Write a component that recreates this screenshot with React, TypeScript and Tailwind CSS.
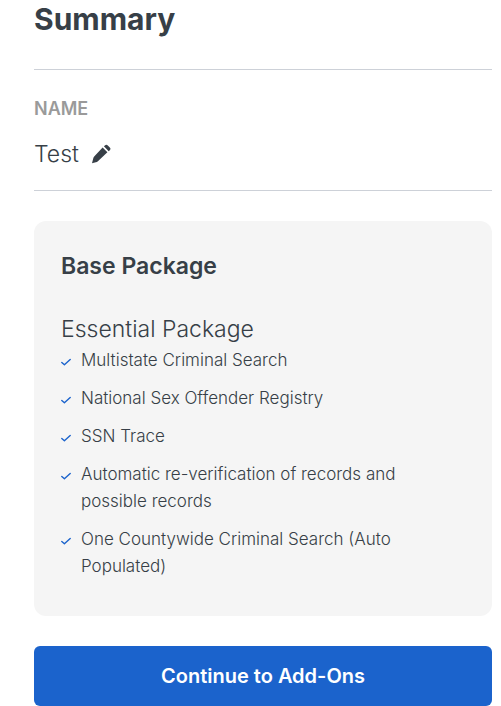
const packageItems = [
  "Multistate Criminal Search",
  "National Sex Offender Registry",
  "SSN Trace",
  "Automatic re-verification of records and possible records",
  "One Countywide Criminal Search (Auto Populated)",
];

const PencilIcon = () => (
  <svg viewBox="0 0 20 20" className="size-5" fill="currentColor" aria-hidden="true">
    <path d="M11.6 3.4 16.4 8.2 6.9 17.2Q6 18 4.8 18.3L1 19.2 2.1 15Q2.4 13.6 3.2 12.6z" />
    <path d="m12.9 2.3 1-.9a2.1 2.1 0 0 1 2.9 0l2 2a2.1 2.1 0 0 1 0 2.9l-1.1 1z" />
  </svg>
);

const CheckIcon = () => (
  <svg
    viewBox="0 0 10 8"
    className="mt-[11px] h-2 w-2.5 shrink-0"
    fill="none"
    stroke="#1b63cc"
    strokeWidth="1.4"
    strokeLinecap="round"
    strokeLinejoin="round"
    aria-hidden="true"
  >
    <path d="M.8 4.4 3.4 6.7 9.2 1.5" />
  </svg>
);

const App = () => {
  return (
    <main className="min-h-screen bg-white pl-[34px] pr-[9px] font-['Inter',sans-serif] text-[#373f47]">
      <h1 className="border-b border-[#cdd1d8] pb-8 pt-px text-[30px] font-bold leading-9">
        Summary
      </h1>

      <section className="border-b border-[#cdd1d8] pb-5 pt-[25px]">
        <h2 className="text-lg font-semibold leading-7 text-[#9a9a9a]">NAME</h2>
        <div className="mt-[15px] flex items-center gap-3">
          <span className="text-[23px] font-light leading-8">Test</span>
          <button type="button" aria-label="Edit name" className="cursor-pointer">
            <PencilIcon />
          </button>
        </div>
      </section>

      <section className="mt-[30px] rounded-xl bg-[#f5f5f5] px-[27px] pb-9 pt-[29px]">
        <h2 className="text-[23px] font-semibold leading-8">Base Package</h2>
        <h3 className="mt-[31px] text-[23px] font-light leading-8">Essential Package</h3>
        <ul className="mt-0.5 flex flex-col gap-[11px]">
          {packageItems.map((item) => (
            <li key={item} className="flex gap-2.5">
              <CheckIcon />
              <span className="text-[17px] font-light leading-[27px]">{item}</span>
            </li>
          ))}
        </ul>
      </section>

      <button
        type="button"
        className="mt-[30px] h-[60px] w-full cursor-pointer rounded-md bg-[#1b63cc] text-xl font-semibold text-white"
      >
        Continue to Add-Ons
      </button>
    </main>
  );
};

export default App;
